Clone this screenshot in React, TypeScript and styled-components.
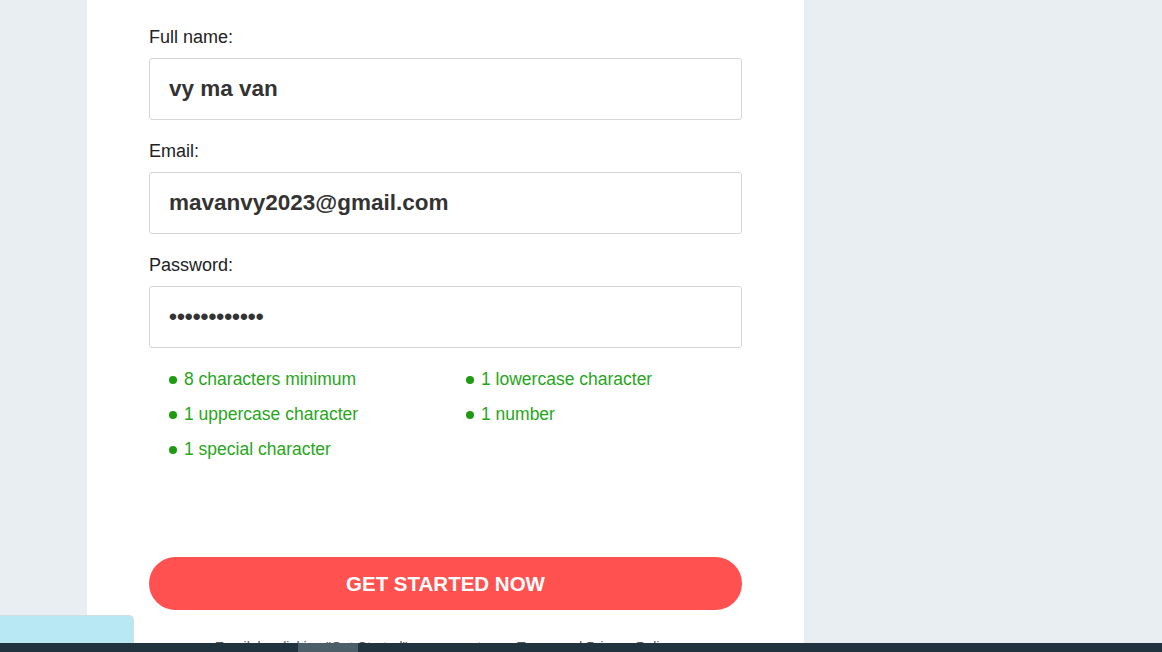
import React from "react";
import styled, { createGlobalStyle } from "styled-components";

const Global = createGlobalStyle`
  html, body { margin: 0; padding: 0; }
  body {
    background: #e9eef3;
    font-family: "Liberation Sans", Arial, sans-serif;
    overflow: hidden;
  }
`;

const Page = styled.div`
  display: flex;
  min-height: 652px;
  padding-left: 87px;
`;

const Card = styled.main`
  width: 717px;
  background: #ffffff;
  box-sizing: border-box;
  padding: 27px 62px 0 62px;
  display: flex;
  flex-direction: column;
`;

const Field = styled.div`
  display: flex;
  flex-direction: column;
  margin-bottom: 21px;
`;

const Label = styled.label`
  font-size: 18px;
  line-height: 21px;
  color: #222222;
  margin-bottom: 10px;
`;

const Input = styled.input`
  box-sizing: border-box;
  height: 62px;
  width: 100%;
  border: 1px solid #d6d6d6;
  border-radius: 3px;
  padding: 0 19px;
  font-family: "Liberation Sans", Arial, sans-serif;
  font-weight: bold;
  font-size: 22.5px;
  color: #333333;
  background: #fff;
  outline: none;
`;

const Rules = styled.ul`
  list-style: none;
  margin: 0;
  padding: 0 0 0 20px;
  display: grid;
  grid-template-columns: 297px 1fr;
  row-gap: 14px;
`;

const Rule = styled.li`
  font-size: 17.5px;
  line-height: 21px;
  color: #27a61b;
  display: flex;
  align-items: center;
  gap: 7px;
`;

const Dot = styled.span`
  width: 8px;
  height: 8px;
  border-radius: 50%;
  background: #1f9a12;
  flex: none;
`;

const Button = styled.button`
  margin-top: 97px;
  height: 53px;
  width: 100%;
  border: none;
  border-radius: 27px;
  background: #fe5150;
  color: #ffffff;
  font-family: "Liberation Sans", Arial, sans-serif;
  font-weight: bold;
  font-size: 20.5px;
  cursor: pointer;
`;

const Terms = styled.p`
  margin: 28px 0 0;
  text-align: center;
  font-size: 14px;
  line-height: 18px;
  color: #555;
`;

const Side = styled.div`
  flex: 1;
`;

const ChatTab = styled.div`
  position: fixed;
  left: 0;
  bottom: 9px;
  width: 134px;
  height: 28px;
  background: #b8e8f3;
  border: 1px solid #cfdfe4;
  border-left: none;
  border-bottom: none;
  border-top-right-radius: 5px;
  box-sizing: border-box;
`;

const BottomBar = styled.div`
  position: fixed;
  left: 0;
  right: 0;
  bottom: 0;
  height: 9px;
  background: #20333e;
`;

const Thumb = styled.div`
  position: absolute;
  left: 298px;
  top: 0;
  width: 60px;
  height: 9px;
  background: #4c5e67;
`;

const rules = [
  "8 characters minimum",
  "1 lowercase character",
  "1 uppercase character",
  "1 number",
  "1 special character",
];

export default function App() {
  return (
    <>
      <Global />
      <Page>
        <Card>
          <Field>
            <Label>Full name:</Label>
            <Input defaultValue="vy ma van" />
          </Field>
          <Field>
            <Label>Email:</Label>
            <Input defaultValue="mavanvy2023@gmail.com" />
          </Field>
          <Field>
            <Label>Password:</Label>
            <Input type="password" defaultValue="mavanvy2023!" />
          </Field>
          <Rules>
            {rules.map((r) => (
              <Rule key={r}>
                <Dot />
                {r}
              </Rule>
            ))}
          </Rules>
          <Button>GET STARTED NOW</Button>
          <Terms>
            Email: by clicking "Get Started" you agree to our Terms and Privacy Policy.
          </Terms>
        </Card>
        <Side />
      </Page>
      <ChatTab />
      <BottomBar>
        <Thumb />
      </BottomBar>
    </>
  );
}
